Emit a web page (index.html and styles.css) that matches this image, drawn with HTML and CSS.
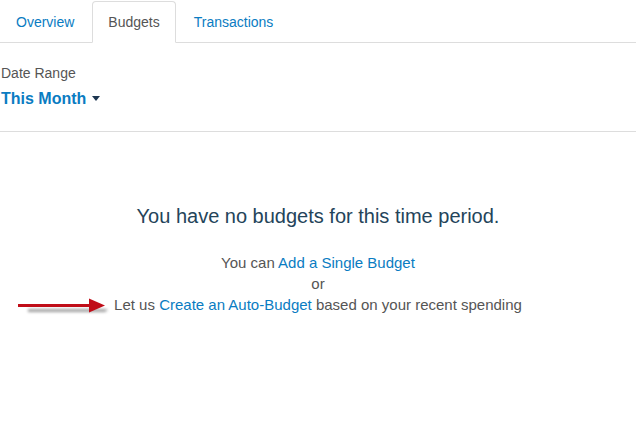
FILE: index.html
```html
<!DOCTYPE html>
<html lang="en">
<head>
  <meta charset="UTF-8">
  <title>Budgets</title>
  <link rel="stylesheet" href="styles.css">
</head>
<body>
  <ul class="tabs">
    <li><a href="#">Overview</a></li>
    <li class="active"><a href="#">Budgets</a></li>
    <li><a href="#">Transactions</a></li>
  </ul>

  <div class="range">
    <div class="range-label">Date Range</div>
    <a href="#" class="range-value">This Month <span class="caret"></span></a>
  </div>

  <div class="empty">
    <h2>You have no budgets for this time period.</h2>
    <p>You can <a href="#">Add a Single Budget</a></p>
    <p>or</p>
    <p class="auto">
      <svg class="arrow" width="96" height="20" viewBox="0 0 96 20">
        <defs>
          <filter id="shadow" x="-10%" y="-50%" width="130%" height="250%">
            <feGaussianBlur stdDeviation="1.4"/>
          </filter>
        </defs>
        <path d="M10 11 H87 L90 12 L87 14 H10 Z" fill="#777" opacity="0.7" filter="url(#shadow)"/>
        <rect x="0" y="6" width="73" height="3" fill="#c00d18"/>
        <path d="M71 0.5 L87 7.5 L71 14.5 Z" fill="#c00d18"/>
      </svg>
      Let us <a href="#">Create an Auto-Budget</a> based on your recent spending
    </p>
  </div>
</body>
</html>
```

FILE: styles.css
```css
body {
  margin: 0;
  font-family: "Liberation Sans", Arial, sans-serif;
  font-size: 14px;
  color: #555;
  background: #fff;
}
a {
  color: #0a7cc2;
  text-decoration: none;
}

.tabs {
  list-style: none;
  margin: 0;
  padding: 1px 0 0;
  display: flex;
  border-bottom: 1px solid #ddd;
}
.tabs li {
  margin-right: 2px;
  margin-bottom: -1px;
}
.tabs a {
  display: block;
  padding: 10px 15px;
  line-height: 20px;
  border: 1px solid transparent;
  border-radius: 4px 4px 0 0;
}
.tabs .active a {
  color: #555;
  background: #fff;
  border-color: #ddd #ddd transparent;
}

.range {
  padding: 20px 1px 22px;
  border-bottom: 1px solid #ddd;
}
.range-label {
  line-height: 20px;
}
.range-value {
  display: inline-block;
  margin-top: 6px;
  font-size: 16px;
  font-weight: bold;
  line-height: 20px;
}
.caret {
  display: inline-block;
  width: 0;
  height: 0;
  margin-left: 1px;
  vertical-align: 3px;
  border-top: 5px solid #1c3550;
  border-left: 4.5px solid transparent;
  border-right: 4.5px solid transparent;
}

.empty {
  text-align: center;
  padding-top: 72px;
}
.empty h2 {
  margin: 0 0 24px;
  font-size: 20px;
  font-weight: normal;
  line-height: 24px;
  color: #24445a;
}
.empty p {
  margin: 0;
  font-size: 15px;
  line-height: 21px;
}
.auto {
  position: relative;
}
.arrow {
  position: absolute;
  left: 18px;
  top: 4px;
}
```
